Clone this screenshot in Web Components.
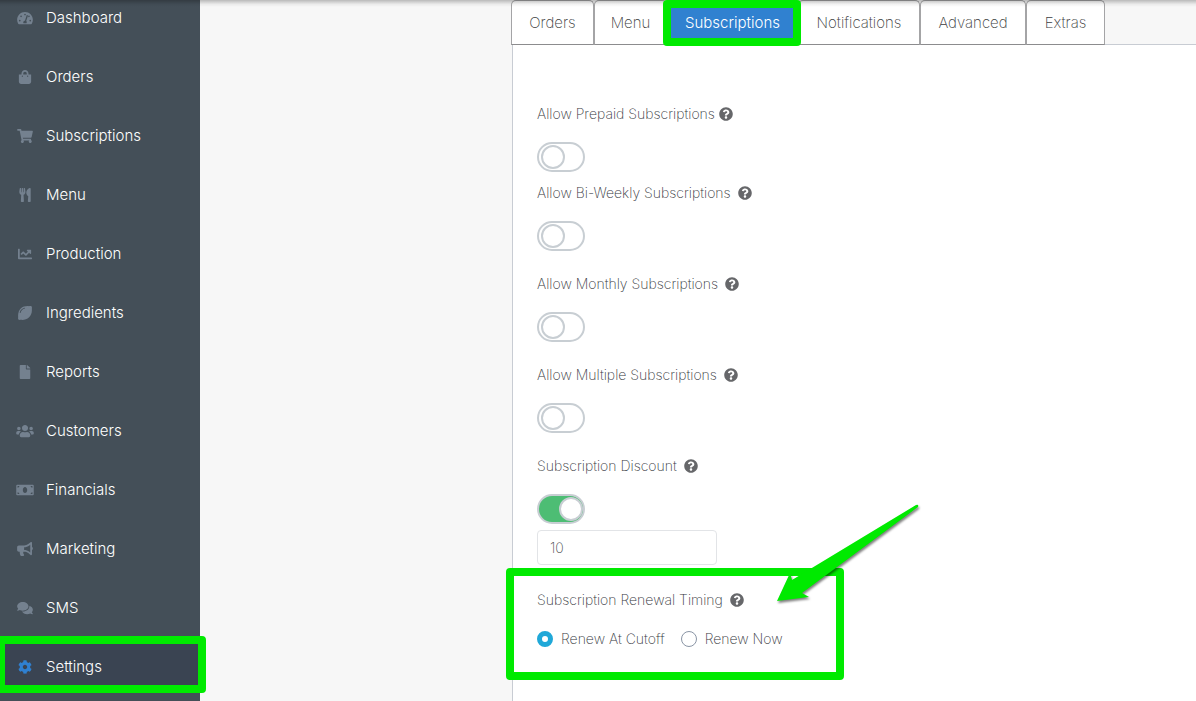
<!DOCTYPE html>
<html lang="en">
<head>
<meta charset="utf-8">
<meta name="viewport" content="width=device-width, initial-scale=1">
<title>Settings</title>
<style>
  html, body { margin: 0; height: 100%; }
  body { font-family: Inter, "Open Sans", sans-serif; background: #f7f7f7; color: #36383e; overflow: hidden; }
</style>
</head>
<body>
<settings-app></settings-app>

<script>
const ICONS = {
  dashboard: ['0 0 576 512', 'M288 32C129 32 0 161 0 320c0 53 14 102 39 145 5 9 15 15 26 15h446c11 0 21-6 26-15 25-43 39-92 39-145C576 161 447 32 288 32zm0 64c18 0 32 14 32 32s-14 32-32 32-32-14-32-32 14-32 32-32zM96 384c-18 0-32-14-32-32s14-32 32-32 32 14 32 32-14 32-32 32zm48-160c-18 0-32-14-32-32s14-32 32-32 32 14 32 32-14 32-32 32zm203 160c3 9 5 18 5 28 0 13-4 24-10 36H234c-6-12-10-23-10-36 0-35 29-60 62-60l61-185c4-13 18-20 30-15 13 4 20 18 15 30l-61 184c7 5 12 11 16 18zm55-183c5-24 14-41 30-41 18 0 32 14 32 32s-14 32-32 32c-17 0-30-9-30-23zm78 183c-18 0-32-14-32-32s14-32 32-32 32 14 32 32-14 32-32 32z'],
  bag: ['0 0 448 512', 'M352 160v-32C352 57.42 294.579 0 224 0 153.42 0 96 57.42 96 128v32H0v272c0 44.183 35.817 80 80 80h288c44.183 0 80-35.817 80-80V160h-96zm-192-32c0-35.29 28.71-64 64-64s64 28.71 64 64v32H160v-32zm160 120c-13.255 0-24-10.745-24-24s10.745-24 24-24 24 10.745 24 24-10.745 24-24 24zm-192 0c-13.255 0-24-10.745-24-24s10.745-24 24-24 24 10.745 24 24-10.745 24-24 24z'],
  cart: ['0 0 576 512', 'M528.12 301.319l47.273-208C578.806 78.301 567.391 64 551.99 64H159.208l-9.166-44.81C147.758 8.021 137.93 0 126.529 0H24C10.745 0 0 10.745 0 24v16c0 13.255 10.745 24 24 24h69.883l70.248 343.435C147.325 417.1 136 435.222 136 456c0 30.928 25.072 56 56 56s56-25.072 56-56c0-15.674-6.447-29.835-16.824-40h209.647C430.447 426.165 424 440.326 424 456c0 30.928 25.072 56 56 56s56-25.072 56-56c0-22.172-12.888-41.332-31.579-50.405l5.517-24.276c3.413-15.018-8.002-29.319-23.403-29.319H218.117l-6.545-32h293.145c11.206 0 20.92-7.754 23.403-18.681z'],
  utensils: ['0 0 416 512', 'M207.9 15.2c.8 4.7 16.1 94.5 16.1 128.8 0 52.3-27.8 89.6-68.9 104.6L168 486.7c.7 13.7-10.2 25.3-24 25.3H80c-13.7 0-24.7-11.5-24-25.3l12.9-238.1C27.7 233.6 0 196.2 0 144 0 109.6 15.3 19.9 16.1 15.2 19.3-5.1 61.4-5.4 64 16.3v141.2c1.3 3.4 15.1 3.2 16 0 1.4-25.3 7.9-139.2 8-141.8 3.3-20.8 44.7-20.8 47.9 0 .2 2.7 6.6 116.5 8 141.8.9 3.2 14.8 3.4 16 0V16.3c2.6-21.6 44.8-21.4 47.9-1.1zm119.2 285.7l-15 185.1c-1.2 14 9.9 26 23.9 26h56c13.3 0 24-10.7 24-24V24c0-13.2-10.7-24-24-24-82.5 0-221.4 178.5-64.9 300.9z'],
  chart: ['0 0 512 512', 'M496 384H64V80c0-8.84-7.16-16-16-16H16C7.16 64 0 71.16 0 80v336c0 17.67 14.33 32 32 32h464c8.84 0 16-7.16 16-16v-32c0-8.84-7.16-16-16-16zM464 96H345.94c-21.38 0-32.09 25.85-16.97 40.97l32.4 32.4L288 242.75l-73.37-73.37c-12.5-12.5-32.76-12.5-45.25 0l-68.69 68.69c-6.25 6.25-6.25 16.38 0 22.63l22.62 22.62c6.25 6.25 16.38 6.25 22.63 0L192 237.25l73.37 73.37c12.5 12.5 32.76 12.5 45.25 0l96-96 32.4 32.4c15.12 15.12 40.97 4.41 40.97-16.97V112c.01-8.84-7.15-16-15.99-16z'],
  lemon: ['0 0 512 512', 'M498 14C484 0 440 0 400 6 300-4 180 14 100 92S-6 300 6 400C0 440 0 484 14 498s58 14 98 8c100 10 214-14 294-92s112-204 100-302c6-40 6-84-8-98zM244 95C175 112 112 175 95 244c-6 22-36 14-32-8C84 151 151 84 236 63c22-4 30 26 8 32z'],
  file: ['0 0 384 512', 'M224 136V0H24C10.7 0 0 10.7 0 24v464c0 13.3 10.7 24 24 24h336c13.3 0 24-10.7 24-24V160H248c-13.2 0-24-10.8-24-24zm160-14.1v6.1H256V0h6.1c6.4 0 12.5 2.5 17 7l97.9 98c4.5 4.5 7 10.6 7 16.9z'],
  users: ['0 0 640 512', 'M96 224c35 0 64-29 64-64s-29-64-64-64-64 29-64 64 29 64 64 64zm448 0c35 0 64-29 64-64s-29-64-64-64-64 29-64 64 29 64 64 64zm32 32h-64c-18 0-34 7-45 19 40 22 69 61 75 109h66c18 0 32-14 32-32v-32c0-35-29-64-64-64zm-256 0c62 0 112-50 112-112S382 32 320 32 208 82 208 144s50 112 112 112zm77 32h-8c-21 10-44 16-69 16s-48-6-69-16h-8c-64 0-115 52-115 115v29c0 27 21 48 48 48h288c27 0 48-21 48-48v-29c0-63-51-115-115-115zm-224-13c-11-12-27-19-45-19H64c-35 0-64 29-64 64v32c0 18 14 32 32 32h66c6-48 35-87 75-109z'],
  money: ['0 0 640 512', 'M32 64C14 64 0 78 0 96v320c0 18 14 32 32 32h576c18 0 32-14 32-32V96c0-18-14-32-32-32H32zm16 48h64c0 35-29 64-64 64v-64zm0 288v-64c35 0 64 29 64 64H48zm272-32c-44 0-80-50-80-112s36-112 80-112 80 50 80 112-36 112-80 112zm272 32h-64c0-35 29-64 64-64v64zm0-224c-35 0-64-29-64-64h64v64z'],
  bullhorn: ['0 0 576 512', 'M576 240c0-23.63-12.95-44.04-32-55.12V32.01C544 23.26 537.02 0 512 0c-7.12 0-14.19 2.38-19.98 7.02l-85.03 68.03C364.28 109.19 310.66 128 256 128H64c-35.35 0-64 28.65-64 64v96c0 35.35 28.65 64 64 64h33.7c-1.39 10.48-2.18 21.14-2.18 32 0 39.77 9.26 77.35 25.56 110.94 5.19 10.69 16.52 17.06 28.4 17.06h74.28c26.05 0 41.69-29.84 25.9-50.56-16.4-21.52-26.15-48.36-26.15-77.44 0-11.11 1.62-21.79 4.41-32H256c54.66 0 108.28 18.81 150.98 52.95l85.03 68.03a32.023 32.023 0 0 0 19.98 7.02c24.92 0 32-22.78 32-32V295.13C563.05 284.04 576 263.63 576 240zm-96 141.42l-33.05-26.44C392.95 311.78 325.12 288 256 288v-96c69.12 0 136.95-23.78 190.95-66.98L480 98.58v282.84z'],
  comments: ['0 0 576 512', 'M416 192c0-88.4-93.1-160-208-160S0 103.6 0 192c0 34.3 14.1 65.9 38 92-13.4 30.2-35.5 54.2-35.8 54.5-2.2 2.3-2.8 5.7-1.5 8.7S4.8 352 8 352c36.6 0 66.9-12.3 88.7-25 32.2 15.7 70.3 25 111.3 25 114.9 0 208-71.6 208-160zm122 220c23.9-26 38-57.7 38-92 0-66.9-53.5-124.2-129.3-148.1.9 6.6 1.3 13.3 1.3 20.1 0 105.9-107.7 192-240 192-10.8 0-21.3-.8-31.7-1.9C207.8 439.6 281.8 480 368 480c41 0 79.1-9.2 111.3-25 21.8 12.7 52.1 25 88.7 25 3.2 0 6.1-1.9 7.3-4.8 1.3-2.9.7-6.3-1.5-8.7-.3-.3-22.4-24.2-35.8-54.5z'],
  cog: ['0 0 512 512', 'M487.4 315.7l-42.6-24.6c4.3-23.2 4.3-47 0-70.2l42.6-24.6c4.9-2.8 7.1-8.6 5.5-14-11.1-35.6-30-67.8-54.7-94.6-3.8-4.1-10-5.1-14.8-2.3L380.8 110c-17.9-15.4-38.5-27.3-60.8-35.1V25.8c0-5.6-3.9-10.5-9.4-11.7-36.7-8.2-74.3-7.8-109.2 0-5.5 1.2-9.4 6.1-9.4 11.7V75c-22.2 7.9-42.8 19.8-60.8 35.1L88.7 85.5c-4.9-2.8-11-1.9-14.8 2.3-24.7 26.7-43.6 58.9-54.7 94.6-1.7 5.4.6 11.2 5.5 14L67.3 221c-4.3 23.2-4.3 47 0 70.2l-42.6 24.6c-4.9 2.8-7.1 8.6-5.5 14 11.1 35.6 30 67.8 54.7 94.6 3.8 4.1 10 5.1 14.8 2.3l42.6-24.6c17.9 15.4 38.5 27.3 60.8 35.1v49.2c0 5.6 3.9 10.5 9.4 11.7 36.7 8.2 74.3 7.8 109.2 0 5.5-1.2 9.4-6.1 9.4-11.7v-49.2c22.2-7.9 42.8-19.8 60.8-35.1l42.6 24.6c4.9 2.8 11 1.9 14.8-2.3 24.7-26.7 43.6-58.9 54.7-94.6 1.5-5.5-.7-11.3-5.6-14.1zM256 336c-44.1 0-80-35.9-80-80s35.9-80 80-80 80 35.9 80 80-35.9 80-80 80z'],
  help: ['0 0 512 512', 'M504 256c0 136.997-111.043 248-248 248S8 392.997 8 256C8 119.083 119.043 8 256 8s248 111.083 248 248zM262.655 90c-54.497 0-89.255 22.957-116.549 63.758-3.536 5.286-2.353 12.415 2.715 16.258l34.699 26.31c5.205 3.947 12.621 3.008 16.665-2.122 17.864-22.658 30.113-35.797 57.303-35.797 20.429 0 45.698 13.148 45.698 32.958 0 14.976-12.363 22.667-32.534 33.976C247.128 238.528 216 254.941 216 296v4c0 6.627 5.373 12 12 12h56c6.627 0 12-5.373 12-12v-1.333c0-28.462 83.186-29.647 83.186-106.667 0-58.002-60.165-102-116.531-102zM256 338c-25.365 0-46 20.635-46 46 0 25.364 20.635 46 46 46s46-20.636 46-46c0-25.365-20.635-46-46-46z']
};

class BaseElement extends HTMLElement {
  connectedCallback() {
    if (this.shadowRoot) return;
    this.attachShadow({ mode: 'open' }).innerHTML = this.render();
  }
}

class AppIcon extends BaseElement {
  render() {
    const [box, path] = ICONS[this.getAttribute('name')];
    return `<style>
      :host { display: block; height: 14px; flex: none; }
      svg { display: block; height: 100%; width: 100%; fill: currentColor; }
    </style><svg viewBox="${box}" aria-hidden="true"><path fill-rule="evenodd" d="${path}"/></svg>`;
  }
}

/* Annotation frame laid over the element that hosts it. */
class HighlightFrame extends BaseElement {
  render() {
    return `<style>
      :host { display: block; position: absolute; box-sizing: border-box; border: 8px solid #00ea00; border-radius: 4px; pointer-events: none; z-index: 3; }
    </style>`;
  }
}

class NavItem extends BaseElement {
  render() {
    return `<style>
      :host { display: block; position: relative; }
      a { display: flex; align-items: center; gap: 12px; padding: var(--nav-top, 20px) 16px 20px; line-height: 19px;
          font-size: 15px; font-weight: 300; color: #fff; text-decoration: none; }
      app-icon { width: 18px; color: #74818f; }
      :host([active]) a { background: #3a4452; padding-bottom: 16px; }
      :host([active]) app-icon { color: #2f80d1; }
      highlight-frame { inset: -1px -6px -1px -3px; }
    </style>
    <a href="#"><app-icon name="${this.getAttribute('icon')}"></app-icon><slot></slot></a>
    ${this.hasAttribute('active') ? '<highlight-frame></highlight-frame>' : ''}`;
  }
}

class SideBar extends BaseElement {
  render() {
    return `<style>
      :host { display: block; background: #444f58; }
      nav-item:first-child { --nav-top: 8px; }
    </style>
    <nav>
      <nav-item icon="dashboard">Dashboard</nav-item>
      <nav-item icon="bag">Orders</nav-item>
      <nav-item icon="cart">Subscriptions</nav-item>
      <nav-item icon="utensils">Menu</nav-item>
      <nav-item icon="chart">Production</nav-item>
      <nav-item icon="lemon">Ingredients</nav-item>
      <nav-item icon="file">Reports</nav-item>
      <nav-item icon="users">Customers</nav-item>
      <nav-item icon="money">Financials</nav-item>
      <nav-item icon="bullhorn">Marketing</nav-item>
      <nav-item icon="comments">SMS</nav-item>
      <nav-item icon="cog" active>Settings</nav-item>
    </nav>`;
  }
}

class TabItem extends BaseElement {
  render() {
    return `<style>
      :host { display: block; position: relative; }
      button { display: block; width: 100%; height: 45px; margin: 0; padding: 0; background: #fff;
        border: 1px solid #a4a4a6; border-bottom-color: #8c8c8e; border-radius: 5px 5px 0 0;
        font: 200 15px Inter, sans-serif; color: #3c3d40; }
      :host([active]) button { background: #3081d0; color: #fff; font-weight: 300; }
      highlight-frame { inset: 0 -3px -1px -4px; }
    </style>
    <button type="button" role="tab" aria-selected="${this.hasAttribute('active')}"><slot></slot></button>
    ${this.hasAttribute('active') ? '<highlight-frame></highlight-frame>' : ''}`;
  }
}

class TabBar extends BaseElement {
  render() {
    return `<style>
      :host { display: block; background: linear-gradient(#c8ccd3, #c8ccd3) bottom / 100% 1px no-repeat; }
      div { display: grid; grid-template-columns: 83px 73px 131px 122px 106px 79px; }
    </style>
    <div role="tablist">
      <tab-item>Orders</tab-item><tab-item>Menu</tab-item><tab-item active>Subscriptions</tab-item>
      <tab-item>Notifications</tab-item><tab-item>Advanced</tab-item><tab-item>Extras</tab-item>
    </div>`;
  }
}

class FieldTitle extends BaseElement {
  render() {
    return `<style>
      :host { display: flex; align-items: center; gap: var(--help-gap, 7px); height: 20px; line-height: 20px; font-weight: 200; font-size: 14px; }
      app-icon { width: 14px; color: #66676a; }
    </style><slot></slot><app-icon name="help"></app-icon>`;
  }
}

class ToggleField extends BaseElement {
  render() {
    return `<style>
      :host { display: grid; gap: 18px; justify-items: start; }
      input { appearance: none; box-sizing: border-box; width: 48px; height: 30px; margin: 0; padding: 1px 2px;
        border: 2px solid #c8ced3; border-radius: 15px; background: #fff; }
      input::before { content: ""; display: block; box-sizing: border-box; width: 24px; height: 24px;
        border: 2px solid #c8ced3; border-radius: 50%; background: #fff; }
      input:checked { background: #4dbd74; }
      input:checked::before { margin-left: 18px; }
    </style>
    <field-title><label for="toggle"><slot></slot></label></field-title>
    <input id="toggle" type="checkbox" role="switch" ${this.hasAttribute('checked') ? 'checked' : ''}>`;
  }
}

class RenewalTiming extends BaseElement {
  render() {
    return `<style>
      :host { display: block; position: relative; }
      fieldset { margin: 0; padding: 0; border: 0; min-width: 0; }
      .options { display: flex; gap: 16px; margin-top: 19px; line-height: 20px; font-size: 14px; font-weight: 200; }
      label { display: flex; align-items: center; gap: 8px; }
      input { appearance: none; box-sizing: border-box; width: 16px; height: 16px; margin: 0;
        border: 1px solid #8a95a5; border-radius: 50%; background: #fff; }
      input:checked { border: 5px solid #20a8d8; }
      highlight-frame { top: -22px; left: -31px; width: 338px; height: 112px; }
      svg { position: absolute; left: 233px; top: -90px; z-index: 4; overflow: visible; filter: drop-shadow(1px 2px 1px rgb(0 0 0 / 50%)); }
    </style>
    <fieldset aria-labelledby="title">
      <field-title id="title">Subscription Renewal Timing</field-title>
      <div class="options">
        <label><input type="radio" name="renewal" checked>Renew At Cutoff</label>
        <label><input type="radio" name="renewal">Renew Now</label>
      </div>
    </fieldset>
    <highlight-frame></highlight-frame>
    <svg width="150" height="110" aria-hidden="true"><path fill="#00ea00" d="M7 101L20 73L22 80L146 5Q149 4 148 7L32 93L39 97Z"/></svg>`;
  }
}

class SubscriptionPanel extends BaseElement {
  render() {
    return `<style>
      :host { display: flex; flex-direction: column; align-items: flex-start; flex: 1; background: #fff;
        border-left: 1px solid #c8ccd3; margin-left: 1px; padding: 59px 24px 0; }
      .first { --help-gap: 4px; margin-bottom: 11px; }
      toggle-field { margin-bottom: 23px; }
      .discount { margin-bottom: 6px; }
      input { box-sizing: border-box; width: 180px; height: 35px; margin: 0 0 25px; padding: 0 12px;
        border: 1px solid #e2e4e7; border-radius: 4px; font: 200 14px Inter, sans-serif; color: #4c4d50; background: #fff; }
    </style>
    <toggle-field class="first">Allow Prepaid Subscriptions</toggle-field>
    <toggle-field>Allow Bi-Weekly Subscriptions</toggle-field>
    <toggle-field>Allow Monthly Subscriptions</toggle-field>
    <toggle-field>Allow Multiple Subscriptions</toggle-field>
    <toggle-field class="discount" checked>Subscription Discount</toggle-field>
    <input type="text" value="10" aria-label="Subscription discount amount">
    <renewal-timing></renewal-timing>`;
  }
}

class SettingsApp extends BaseElement {
  render() {
    return `<style>
      :host { display: grid; grid-template-columns: 200px 1fr; min-height: 100vh; position: relative; }
      :host::before { content: ""; position: absolute; inset: 0 0 auto; height: 7px; z-index: 2; pointer-events: none;
        background: linear-gradient(rgb(0 0 0 / 25%), rgb(0 0 0 / 5%) 60%, transparent); }
      main { display: flex; flex-direction: column; padding-left: 311px; }
    </style>
    <side-bar></side-bar>
    <main><tab-bar></tab-bar><subscription-panel></subscription-panel></main>`;
  }
}

customElements.define('app-icon', AppIcon);
customElements.define('highlight-frame', HighlightFrame);
customElements.define('nav-item', NavItem);
customElements.define('side-bar', SideBar);
customElements.define('tab-item', TabItem);
customElements.define('tab-bar', TabBar);
customElements.define('field-title', FieldTitle);
customElements.define('toggle-field', ToggleField);
customElements.define('renewal-timing', RenewalTiming);
customElements.define('subscription-panel', SubscriptionPanel);
customElements.define('settings-app', SettingsApp);
</script>
</body>
</html>
